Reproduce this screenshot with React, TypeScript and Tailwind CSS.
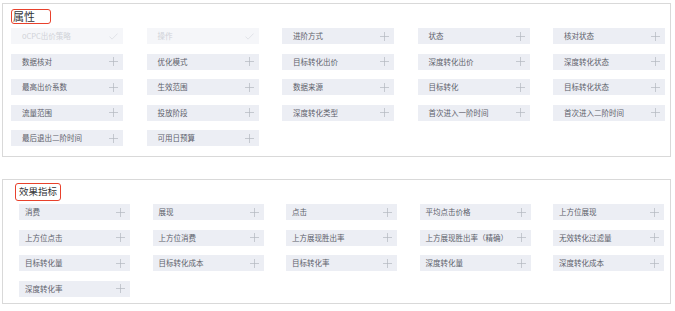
import type { ReactNode } from "react";

type Chip = { label: string; disabled?: boolean };

const attrChips: Chip[] = [
  { label: "oCPC出价策略", disabled: true },
  { label: "操作", disabled: true },
  { label: "进阶方式" },
  { label: "状态" },
  { label: "核对状态" },
  { label: "数据核对" },
  { label: "优化模式" },
  { label: "目标转化出价" },
  { label: "深度转化出价" },
  { label: "深度转化状态" },
  { label: "最高出价系数" },
  { label: "生效范围" },
  { label: "数据来源" },
  { label: "目标转化" },
  { label: "目标转化状态" },
  { label: "流量范围" },
  { label: "投放阶段" },
  { label: "深度转化类型" },
  { label: "首次进入一阶时间" },
  { label: "首次进入二阶时间" },
  { label: "最后退出二阶时间" },
  { label: "可用日预算" },
];

const metricChips: Chip[] = [
  { label: "消费" },
  { label: "展现" },
  { label: "点击" },
  { label: "平均点击价格" },
  { label: "上方位展现" },
  { label: "上方位点击" },
  { label: "上方位消费" },
  { label: "上方展现胜出率" },
  { label: "上方展现胜出率（精确）" },
  { label: "无效转化过滤量" },
  { label: "目标转化量" },
  { label: "目标转化成本" },
  { label: "目标转化率" },
  { label: "深度转化量" },
  { label: "深度转化成本" },
  { label: "深度转化率" },
];

function PlusIcon() {
  return (
    <svg width="9" height="9" viewBox="0 0 9 9" className="shrink-0">
      <path d="M4.5 0v9M0 4.5h9" stroke="#b3b7bf" strokeWidth="0.7" fill="none" />
    </svg>
  );
}

function CheckIcon() {
  return (
    <svg width="9" height="7" viewBox="0 0 9 7" className="shrink-0">
      <path d="M0.5 3.6l2.6 2.5L8.5 0.6" stroke="#d8dbe1" strokeWidth="0.7" fill="none" />
    </svg>
  );
}

function ChipItem({ chip, padLeft }: { chip: Chip; padLeft: string }) {
  return (
    <div
      className={`flex h-[16px] items-center justify-between pr-[5px] ${padLeft} ${
        chip.disabled ? "bg-[#f5f6f9] text-[#d0d2d8]" : "bg-[#eceef4] text-[#5c606a]"
      }`}
    >
      <span className="whitespace-nowrap text-[7.5px] leading-none">{chip.label}</span>
      {chip.disabled ? <CheckIcon /> : <PlusIcon />}
    </div>
  );
}

function Title({ children, className }: { children: ReactNode; className: string }) {
  return (
    <div
      className={`flex items-center rounded-[3px] border-[1.5px] border-[#e8412c] pl-[1px] text-[#333438] ${className}`}
    >
      {children}
    </div>
  );
}

export default function App() {
  return (
    <div
      className="h-[311px] w-[675px] bg-white pl-[2px] pt-[3px]"
      style={{ fontFamily: '"Noto Sans CJK SC", "Noto Sans", sans-serif' }}
    >
      <section className="h-[154px] w-[669px] border border-[#d9d9d9] pl-[8px] pt-[5px]">
        <Title className="h-[15px] w-[40px] text-[11px] leading-none">属性</Title>
        <div className="mt-[4px] grid grid-cols-[repeat(5,112px)] gap-x-[23.5px] gap-y-[9.5px]">
          {attrChips.map((chip) => (
            <ChipItem key={chip.label} chip={chip} padLeft="pl-[11px]" />
          ))}
        </div>
      </section>

      <section className="mt-[22px] h-[125px] w-[669px] border border-[#d9d9d9] pl-[12px] pt-[3px]">
        <Title className="h-[18px] w-[46px] pl-[3px] text-[9.5px] leading-none">效果指标</Title>
        <div className="ml-[4px] mt-[3px] grid grid-cols-[repeat(5,111px)] gap-x-[22.5px] gap-y-[9.5px]">
          {metricChips.map((chip) => (
            <ChipItem key={chip.label} chip={chip} padLeft="pl-[6px]" />
          ))}
        </div>
      </section>
    </div>
  );
}
